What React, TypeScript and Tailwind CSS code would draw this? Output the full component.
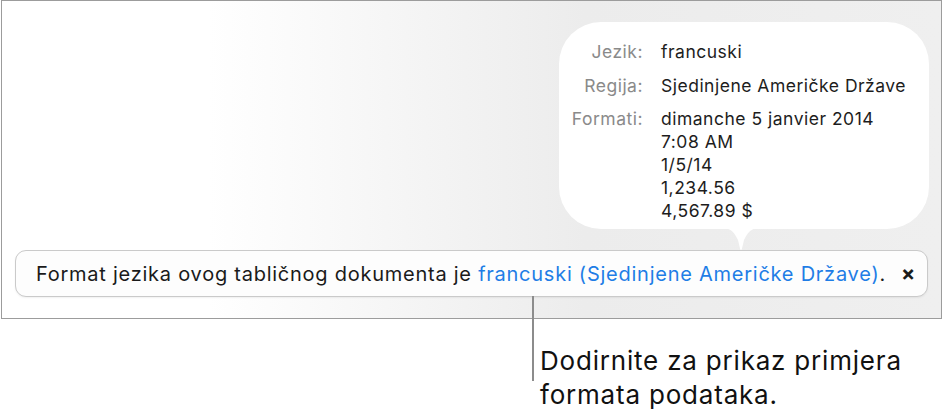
import React from "react";

const font = { fontFamily: "Inter, 'Noto Sans', 'Liberation Sans', sans-serif" };

function Bubble() {
  return (
    <div className="absolute left-[557px] top-[21px] w-[370px] h-[207px]">
      <div className="h-full w-full rounded-[42px] bg-white pt-[18px]">
        <div className="grid grid-cols-[84px_1fr] gap-x-[18px] gap-y-[10.5px] text-[17.5px] leading-[23px] tracking-[0.5px] text-[#1d1d1d]">
          <div className="text-right text-[#8a8a8a]">Jezik:</div>
          <div>francuski</div>
          <div className="text-right text-[#8a8a8a]">Regija:</div>
          <div>Sjedinjene Američke Države</div>
          <div className="text-right text-[#8a8a8a]">Formati:</div>
          <div className="flex flex-col">
            <span>dimanche 5 janvier 2014</span>
            <span>7:08 AM</span>
            <span>1/5/14</span>
            <span>1,234.56</span>
            <span>4,567.89 $</span>
          </div>
        </div>
      </div>
      <svg
        className="absolute left-[163px] top-[206px]"
        width="38"
        height="23"
        viewBox="0 0 38 23"
      >
        <path d="M0 0 C9 0 12 4 16 12 L18 20.5 Q19 23.5 20 20.5 L22 12 C26 4 29 0 38 0 Z" fill="#ffffff" />
      </svg>
    </div>
  );
}

export default function App() {
  return (
    <div className="w-[944px] h-[420px] bg-white" style={font}>
      <div className="relative ml-[1px] w-[941px] h-[319px] border border-[#9c9c9c] bg-[linear-gradient(to_right,#ffffff_22%,#ececec_62%,#efefef)] flex flex-col justify-end px-[13px] pb-[21px]">
        <div className="h-[47px] rounded-[11px] border border-[#cacaca] bg-[#fdfdfd] shadow-[0_1px_2px_rgba(0,0,0,0.06)] flex items-center pl-[20px] pr-[11px] text-[20px] tracking-[0.75px] text-[#1a1a1a]">
          <span className="flex-1">
            Format jezika ovog tabličnog dokumenta je{" "}
            <span className="text-[#1f7de6]">francuski (Sjedinjene Američke Države)</span>.
          </span>
          <span className="text-[21px] font-bold leading-none">×</span>
        </div>
        <Bubble />
      </div>
      <div className="relative pl-[540px] pt-[25px] text-[26px] leading-[34px] tracking-[0.8px] text-[#111]">
        <div className="absolute left-[532px] top-[-23px] w-[2px] h-[85px] bg-[#8c8c8c]" />
        <div>Dodirnite za prikaz primjera</div>
        <div>formata podataka.</div>
      </div>
    </div>
  );
}
